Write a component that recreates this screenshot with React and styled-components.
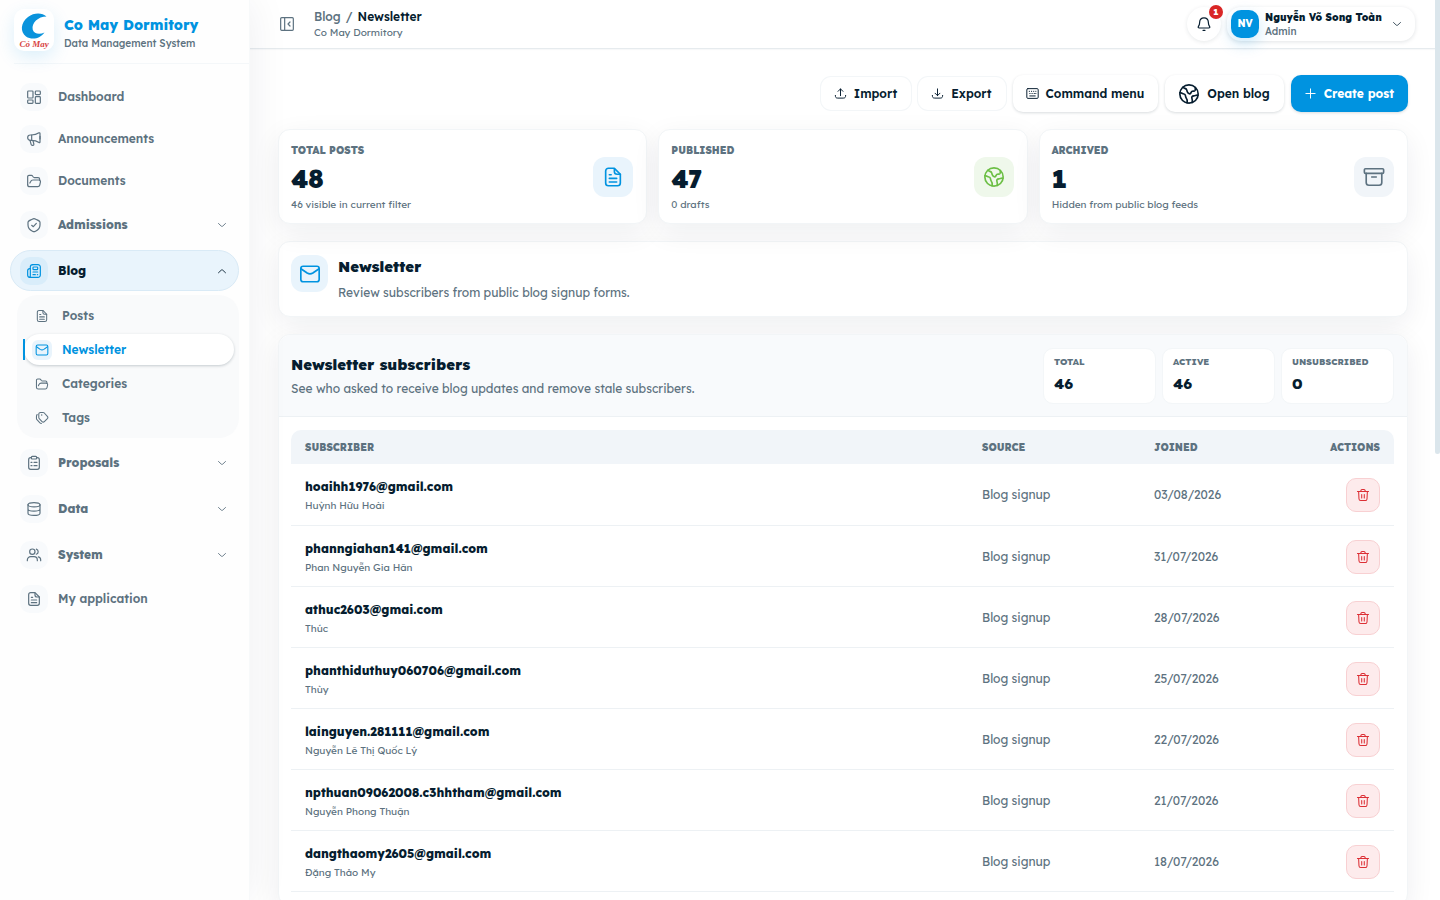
import React from 'react'
import styled, { createGlobalStyle, css, ThemeProvider } from 'styled-components'

const theme = {
  colors: {
    primary: '#0093e0',
    ink: '#061d2f',
    muted: '#5d7280',
    line: '#edf1f4',
    soft: '#f1f5f9',
    tint: '#e9f4fc',
    danger: '#dc2f35',
  },
}

const GlobalStyle = createGlobalStyle`
  * {
    box-sizing: border-box;
  }
  body {
    margin: 0;
    overflow: hidden;
    background: #fff;
    color: ${theme.colors.ink};
    font-family: Lexend, Inter, 'Noto Sans', sans-serif;
    font-size: 12px;
    line-height: 16px;
  }
  button {
    font: inherit;
    color: inherit;
    border: 0;
    padding: 0;
    background: none;
    cursor: pointer;
  }
  a {
    color: inherit;
    text-decoration: none;
  }
  h1, h2, p, ul {
    margin: 0;
    padding: 0;
  }
  ul {
    list-style: none;
  }
`

// 24x24 outlines, one entry per icon
const shapes = {
  dashboard: (
    <>
      <rect x="2.5" y="3" width="8" height="10.5" rx="1.2" />
      <rect x="14" y="3" width="7.5" height="5.5" rx="1.2" />
      <rect x="2.5" y="16.5" width="8" height="5" rx="1.2" />
      <rect x="14" y="11.5" width="7.5" height="10" rx="1.2" />
    </>
  ),
  megaphone: (
    <>
      <path d="M8 6c5 0 9-1.5 11.5-3.2.7-.4 1.5 0 1.5.8v13c0 .8-.9 1.2-1.5.8C17 15.500 13 14 8 14H6.500a4 4 0 0 1 0-8H8Z" />
      <path d="M8.500 6v8M6 14l1.700 6c.2.9.9 1.500 1.800 1.500h1c1 0 1.600-.9 1.300-1.800L10.500 14.300M21 8v4" />
    </>
  ),
  folder: (
    <>
      <path d="M2.500 17.500V5.500a2 2 0 0 1 2-2h3.700a2 2 0 0 1 1.700 1l1 1.500a2 2 0 0 0 1.600.8H18a2.500 2.500 0 0 1 2.500 2.500v1.200" />
      <path d="M2.500 17.500a3 3 0 0 0 3 3h12.200a3 3 0 0 0 2.900-2.300l1-4.500a2.500 2.500 0 0 0-2.400-3.200h-8.700a4 4 0 0 0-3.700 2.500L5.800 15" />
    </>
  ),
  shield: (
    <>
      <path d="M12 2.500c-1 0-2 .5-4 1.400-3.300 1.300-5 2-5 4.100v4c0 5 4 8 6.700 9.300.8.4 1.500.7 2.300.7s1.500-.3 2.300-.7C17 20 21 17 21 12V8c0-2.100-1.700-2.800-5-4.100-2-.9-3-1.400-4-1.400Z" />
      <path d="m8.500 12.500 2.500 2 4.500-5" />
    </>
  ),
  news: (
    <>
      <path d="M10 2.500h8a3.500 3.500 0 0 1 3.500 3.500v12a3.500 3.500 0 0 1-3.500 3.500H5.500a3 3 0 0 1-3-3v-7a3 3 0 0 1 3-3h1" />
      <path d="M6.500 8.500V6A3.500 3.500 0 0 1 10 2.500M6.500 8v10.500a2.500 2.500 0 0 1-1.500 3" />
      <rect x="10.5" y="6" width="7" height="4" rx="1" />
      <path d="M10.500 13.500h7M10.500 17.500H14M17 17.500h.5" />
    </>
  ),
  file: (
    <>
      <path d="M7 2.500h6.500L20 9v9.500a3 3 0 0 1-3 3H7a3 3 0 0 1-3-3v-13a3 3 0 0 1 3-3Z" />
      <path d="M13.500 3v3a3 3 0 0 0 3 3H20M8 9.500h2M8 13.500h8M8 17.500h8" />
    </>
  ),
  mail: (
    <>
      <rect x="2" y="3.5" width="20" height="17" rx="2.5" />
      <path d="m2.500 6.500 6.400 4.400c2.500 1.600 3.700 1.600 6.200 0l6.400-4.400" />
    </>
  ),
  tags: (
    <>
      <path d="M6.500 8V5.500a3 3 0 0 1 3-3h4.300a3 3 0 0 1 2.100.9l5.300 5.800a2.800 2.800 0 0 1 0 3.800l-5.200 5.200a2.800 2.800 0 0 1-4 0l-4.700-5a3 3 0 0 1-.8-2Z" />
      <path d="M3.800 6c-1 .9-1.300 2-1.300 3.500v3.300a3 3 0 0 0 .8 2.100l5.200 5.600c.8.8 1.700 1 2.500 1" />
      <path d="M11.500 7h.01" strokeWidth="2.5" />
    </>
  ),
  clipboard: (
    <>
      <path d="M8 4H7a3 3 0 0 0-3 3v11.500a3 3 0 0 0 3 3h10a3 3 0 0 0 3-3V7a3 3 0 0 0-3-3h-1" />
      <rect x="8" y="2" width="8" height="4" rx="1.5" />
      <path d="M7.500 11H9M12 11h4.500M7.500 16H9M12 16h4.500" />
    </>
  ),
  database: (
    <>
      <ellipse cx="12" cy="5.5" rx="9" ry="3.2" />
      <path d="M3 5.500v13c0 1.800 4 3.200 9 3.200s9-1.400 9-3.200v-13M3 12c0 1.800 4 3.200 9 3.200s9-1.400 9-3.200" />
    </>
  ),
  users: (
    <>
      <circle cx="9.5" cy="7" r="4" />
      <path d="M2 20.500v-1a5 5 0 0 1 5-5h5a5 5 0 0 1 5 5v1M15.500 3.200a4 4 0 0 1 0 7.600M18.500 14.800c2 .5 3.500 2.300 3.500 4.500v1.200" />
    </>
  ),
  panel: (
    <>
      <rect x="2.5" y="2.5" width="19" height="19" rx="1.5" />
      <path d="M8.500 3v18M16.500 9l-3 3 3 3" />
    </>
  ),
  bell: (
    <>
      <path d="M12 2.800c-3.800 0-6.300 2.700-6.500 6.200-.2 3.500 0 4-1.800 6.600C2.700 17 3.300 18 5 18h14c1.700 0 2.300-1 1.300-2.400C18.500 13 18.700 12.500 18.500 9c-.2-3.500-2.700-6.200-6.500-6.200Z" />
      <path d="M10.500 21.500h3" />
    </>
  ),
  upload: <path d="M12 16V3.500M7.500 8 12 3.500 16.500 8M2.500 15.500c0 3.500.9 5 4.500 5h10c3.600 0 4.500-1.500 4.500-5" />,
  download: <path d="M12 3.500V16M7.500 11.500 12 16l4.500-4.500M2.500 15.500c0 3.500.9 5 4.500 5h10c3.600 0 4.500-1.500 4.500-5" />,
  keyboard: (
    <>
      <rect x="1.5" y="3" width="21" height="18" rx="2" />
      <path d="M6 8h.5M10 8h.5M14 8h.5M18 8h.3M7 12h.5M11 12h.5M15 12h.5M18 12h.3M7 16.500h10" />
    </>
  ),
  earth: (
    <>
      <circle cx="12" cy="12" r="10" />
      <path d="M5.500 4.500c1 1.800 3.500 1 4 3 .4 1.700.8 3.800 2.800 4.300 1.900.4 1.600-2.100 3.300-2.700 1.400-.5 2.200.3 3-1.100.5-1 .2-2 .2-3" />
      <path d="M2 10.500c2 0 2.500 1.300 4.500 1.500 2.300.2 1.200 2.600 2.300 4 1.200 1.500 1.700 3.500 1.200 5.700M21.800 13.500c-1.500-.8-3 .5-4.500.5-2 0-2.700 1.500-2 3.300.5 1.500.5 2.700 0 4" />
    </>
  ),
  plus: <path d="M12 3.500v17M3.500 12h17" />,
  archive: (
    <>
      <rect x="1.5" y="3" width="21" height="5" rx="1.2" />
      <path d="M3.500 8v10a3 3 0 0 0 3 3h11a3 3 0 0 0 3-3V8M9.500 12h5" />
    </>
  ),
  trash: (
    <path d="m19.500 6-.6 12.500a3 3 0 0 1-3 3H8.100a3 3 0 0 1-3-3L4.500 6M2.500 6h19M8 5.500l.8-2a1.800 1.800 0 0 1 1.600-1h3.200c.7 0 1.300.4 1.600 1l.8 2M9.800 11v6M14.200 11v6" />
  ),
  down: <path d="m5 9 5.600 5.300c.8.7 2 .7 2.800 0L19 9" />,
  up: <path d="m5 15.500 5.600-5.300c.8-.7 2-.7 2.800 0L19 15.500" />,
}

const Svg = styled.svg`
  display: block;
  flex: none;
  fill: none;
  stroke: currentColor;
  stroke-linecap: round;
  stroke-linejoin: round;
`
function Icon({ name, size = 16, weight = 1.8 }) {
  return (
    <Svg width={size} height={size} viewBox="0 0 24 24" strokeWidth={weight} aria-hidden="true">
      {shapes[name]}
    </Svg>
  )
}

const Shell = styled.div`
  display: flex;
  height: 100vh;
  overflow: hidden;
`
const Sidebar = styled.aside`
  position: relative;
  flex: none;
  width: 250px;
  border-right: 1px solid #f7f9fa;
  background: #fefefe;
  box-shadow: 0 0 40px rgba(15, 35, 50, 0.07);
`
const Brand = styled.div`
  display: flex;
  align-items: center;
  gap: 10px;
  height: 64px;
  margin-left: 14px;
  border-bottom: 1px solid #f4f7f9;
`
const Logo = styled.div`
  width: 40px;
  height: 42px;
  margin-bottom: 4px;
  border-radius: 10px;
  background: #fff;
  box-shadow: 0 6px 18px rgba(0, 147, 224, 0.14);
`
const BrandName = styled.p`
  color: ${(props) => props.theme.colors.primary};
  font-size: 14px;
  font-weight: 800;
  line-height: 20px;
`
const BrandNote = styled.p`
  color: ${(props) => props.theme.colors.muted};
  font-size: 10px;
  font-weight: 500;
  line-height: 18px;
`
const BrandText = styled.div`
  padding-top: 4px;
`
const Menu = styled.ul`
  display: flex;
  flex-direction: column;
  gap: 4px;
  padding: 14px 10px;
`
const entry = css`
  display: flex;
  align-items: center;
  gap: 10px;
  width: 100%;
  color: ${(props) => props.theme.colors.muted};
  text-align: left;
`
const MenuLink = styled.a`
  ${entry}
  height: 38px;
  padding: 0 10px;
  font-weight: 600;
`
const MenuGroup = styled.button`
  ${entry}
  height: ${(props) => (props.$open ? 41 : 42)}px;
  padding: 0 10px 0 9px;
  border: 1px solid ${(props) => (props.$open ? '#d9eaf6' : 'transparent')};
  border-radius: 21px;
  background: ${(props) => (props.$open ? props.theme.colors.tint : 'none')};
  color: ${(props) => (props.$open ? props.theme.colors.ink : props.theme.colors.muted)};
  font-weight: 800;
`
const MenuIcon = styled.span`
  display: grid;
  place-items: center;
  width: 28px;
  height: 28px;
  border-radius: 10px;
  background: ${(props) => (props.$open ? '#d9edfa' : '#f8fafc')};
  color: ${(props) => (props.$open ? props.theme.colors.primary : 'inherit')};
`
const MenuLabel = styled.span`
  flex: 1;
`
const Submenu = styled.ul`
  display: flex;
  flex-direction: column;
  gap: 3px;
  margin: 4px 0 0 7px;
  padding: 5px 5px 5px 7px;
  border-radius: 20px;
  background: #f9fafb;
`
const SubLink = styled.a`
  ${entry}
  position: relative;
  height: 31px;
  padding: 0 8px;
  border-radius: 16px;
  font-weight: 600;

  ${(props) =>
    props.$active &&
    css`
      color: ${props.theme.colors.primary};
      background: #fff;
      box-shadow: 0 1px 3px rgba(15, 35, 50, 0.22);

      &:before {
        content: '';
        position: absolute;
        left: -1px;
        top: 5px;
        width: 2px;
        height: 21px;
        background: ${props.theme.colors.primary};
      }
    `}
`
const SubIcon = styled.span`
  display: grid;
  place-items: center;
  width: 20px;
  height: 20px;
  border-radius: 6px;
  background: ${(props) => (props.$active ? props.theme.colors.tint : 'none')};
`
const Page = styled.div`
  display: flex;
  flex: 1;
  flex-direction: column;
  min-width: 0;
`
const ScrollRail = styled.div`
  flex: none;
  width: 5px;
`
const ScrollThumb = styled.div`
  height: 50.4vh;
  border-radius: 0 0 3px 3px;
  background: #dbe6ec;
`
const Topbar = styled.header`
  display: flex;
  flex: none;
  align-items: center;
  height: 49px;
  padding: 0 20px 0 29px;
  border-bottom: 1px solid #e6ebee;
  box-shadow: 0 1px 1px rgba(15, 35, 50, 0.03);
`
const PanelToggle = styled.button`
  color: ${(props) => props.theme.colors.muted};
`
const Crumbs = styled.nav`
  flex: 1;
  margin-left: 19px;
  padding-top: 2px;
  color: ${(props) => props.theme.colors.muted};
`
const CrumbTrail = styled.p`
  display: flex;
  gap: 5px;
  font-weight: 500;
`
const Current = styled.span`
  color: ${(props) => props.theme.colors.ink};
  font-weight: 600;
`
const CrumbNote = styled.p`
  font-size: 10px;
`
const Bell = styled.button`
  position: relative;
  display: grid;
  place-items: center;
  width: 34px;
  height: 34px;
  margin-right: 6px;
  border-radius: 17px;
  box-shadow: 0 1px 4px rgba(15, 35, 50, 0.1);
`
const Badge = styled.span`
  position: absolute;
  top: -2px;
  right: -2px;
  width: 14px;
  height: 14px;
  border-radius: 7px;
  background: #d92626;
  color: #fff;
  font-size: 9px;
  font-weight: 800;
  line-height: 14px;
`
const Account = styled.button`
  display: flex;
  align-items: center;
  gap: 6px;
  width: 188px;
  height: 34px;
  padding: 0 12px 0 4px;
  border-radius: 14px;
  text-align: left;
  box-shadow: 0 1px 4px rgba(15, 35, 50, 0.12);
`
const Avatar = styled.span`
  display: grid;
  flex: none;
  place-items: center;
  width: 28px;
  height: 28px;
  border-radius: 10px;
  background: ${(props) => props.theme.colors.primary};
  color: #fff;
  font-size: 10px;
  font-weight: 800;
  box-shadow: 0 6px 16px rgba(0, 147, 224, 0.2);
`
const AccountText = styled.span`
  flex: 1;
  display: flex;
  flex-direction: column;
  padding-top: 2px;
  font-size: 10px;
  font-weight: 900;
  line-height: 14px;
  white-space: nowrap;
`
const Role = styled.span`
  color: ${(props) => props.theme.colors.muted};
  font-weight: 500;
`
const Content = styled.main`
  flex: 1;
  min-height: 0;
  overflow: hidden;
  padding: 26px 27px 0 28px;
`
const Actions = styled.div`
  display: flex;
  align-items: center;
  justify-content: flex-end;
  gap: 7px;
  margin-bottom: 17px;
`
const Action = styled.button`
  display: flex;
  align-items: center;
  gap: 7px;
  height: ${(props) => (props.$small ? 33 : 37)}px;
  padding: 0 14px 0 13px;
  border-radius: 10px;
  background: ${(props) => (props.$primary ? props.theme.colors.primary : '#fff')};
  color: ${(props) => (props.$primary ? '#fff' : props.theme.colors.ink)};
  font-weight: ${(props) => (props.$primary ? 700 : 600)};
  white-space: nowrap;
  box-shadow: ${(props) =>
    props.$small ? '0 0 0 1px #f3f6f8' : '0 1px 3px rgba(15, 35, 50, 0.16)'};
`
const raised = css`
  border: 1px solid #f2f5f7;
  border-radius: 12px;
  background: #fff;
  box-shadow: 0 8px 28px rgba(15, 35, 50, 0.07);
`
const Stats = styled.div`
  display: grid;
  grid-template-columns: repeat(3, 1fr);
  gap: 11px;
  margin-bottom: 17px;
`
const Stat = styled.section`
  ${raised}
  display: flex;
  align-items: center;
  justify-content: space-between;
  height: 95px;
  padding: 0 13px 0 12px;
`
const Caption = styled.h2`
  color: ${(props) => props.theme.colors.muted};
  font-size: ${(props) => (props.$tiny ? 9 : 10)}px;
  font-weight: ${(props) => (props.$tiny ? 800 : 900)};
  line-height: 16px;
  text-transform: uppercase;
`
const StatValue = styled.p`
  font-size: 25px;
  font-weight: 900;
  line-height: 40px;
`
const StatNote = styled.p`
  color: ${(props) => props.theme.colors.muted};
  font-size: 10px;
  line-height: 12px;
`
const tones = {
  blue: ['#e9f4fc', '#0093e0'],
  green: ['#eff8eb', '#6cbf45'],
  grey: ['#f1f5f9', '#5d7280'],
}
const Tile = styled.span`
  display: grid;
  flex: none;
  place-items: center;
  width: ${(props) => props.$size}px;
  height: ${(props) => props.$size}px;
  border-radius: 12px;
  background: ${(props) => tones[props.$tone][0]};
  color: ${(props) => tones[props.$tone][1]};
`
const Intro = styled.section`
  ${raised}
  display: flex;
  gap: 10px;
  height: 76px;
  margin-bottom: 17px;
  padding: 13px 12px;
`
const IntroText = styled.div`
  display: flex;
  flex-direction: column;
  gap: 2px;
`
const Heading = styled.h1`
  font-size: 15px;
  font-weight: 900;
  line-height: 24px;
`
const Lead = styled.p`
  color: ${(props) => props.theme.colors.muted};
  line-height: 24px;
`
const Panel = styled.section`
  ${raised}
`
const PanelHead = styled.div`
  display: flex;
  align-items: center;
  justify-content: space-between;
  height: 82px;
  padding: 0 13px 0 12px;
  border-bottom: 1px solid ${(props) => props.theme.colors.line};
  border-radius: 12px 12px 0 0;
  background: #f8fafc;
`
const PanelText = styled.div`
  padding-top: 2px;
`
const Counters = styled.div`
  display: grid;
  grid-template-columns: repeat(3, 113px);
  gap: 6px;
`
const Counter = styled.div`
  height: 56px;
  padding: 5px 10px;
  border: 1px solid #f3f6f8;
  border-radius: 10px;
  background: #fff;
`
const CounterValue = styled.p`
  font-size: 15px;
  font-weight: 800;
  line-height: 28px;
`
const TableWrap = styled.div`
  padding: 13px 13px 13px 12px;
`
const Table = styled.table`
  width: 100%;
  border-collapse: separate;
  border-spacing: 0;
  table-layout: fixed;
`
const HeadCell = styled.th`
  width: ${(props) => props.$width || 'auto'};
  height: 34px;
  padding: 2px 14px 0;
  background: ${(props) => props.theme.colors.soft};
  color: ${(props) => props.theme.colors.muted};
  font-size: 10px;
  font-weight: 900;
  text-align: ${(props) => (props.$end ? 'right' : 'left')};
  text-transform: uppercase;

  &:first-child {
    border-top-left-radius: 10px;
  }
  &:last-child {
    border-top-right-radius: 10px;
  }
`
const Cell = styled.td`
  height: 61px;
  padding: 1px 14px 0;
  border-bottom: 1px solid ${(props) => props.theme.colors.line};
  color: ${(props) => props.theme.colors.muted};

  tr:first-child > & {
    height: 62px;
  }
`
const Subscriber = styled.div`
  padding-top: 2px;
`
const Email = styled.p`
  color: ${(props) => props.theme.colors.ink};
  font-weight: 800;
  line-height: 20px;
`
const Person = styled.p`
  font-size: 10px;
  line-height: 18px;
`
const Remove = styled.button`
  display: grid;
  place-items: center;
  width: 34px;
  height: 34px;
  margin-left: auto;
  border: 1px solid #f8d0d2;
  border-radius: 10px;
  background: #fdebec;
  color: ${(props) => props.theme.colors.danger};
`

const menu = [
  { label: 'Dashboard', icon: 'dashboard' },
  { label: 'Announcements', icon: 'megaphone' },
  { label: 'Documents', icon: 'folder' },
  { label: 'Admissions', icon: 'shield', group: true },
  {
    label: 'Blog',
    icon: 'news',
    group: true,
    children: [
      { label: 'Posts', icon: 'file' },
      { label: 'Newsletter', icon: 'mail', active: true },
      { label: 'Categories', icon: 'folder' },
      { label: 'Tags', icon: 'tags' },
    ],
  },
  { label: 'Proposals', icon: 'clipboard', group: true },
  { label: 'Data', icon: 'database', group: true },
  { label: 'System', icon: 'users', group: true },
  { label: 'My application', icon: 'file' },
]

const stats = [
  { label: 'Total posts', value: 48, note: '46 visible in current filter', icon: 'file', tone: 'blue' },
  { label: 'Published', value: 47, note: '0 drafts', icon: 'earth', tone: 'green' },
  { label: 'Archived', value: 1, note: 'Hidden from public blog feeds', icon: 'archive', tone: 'grey' },
]

const counters = [
  ['Total', 46],
  ['Active', 46],
  ['Unsubscribed', 0],
]

const subscribers = [
  ['hoaihh1976@gmail.com', 'Huỳnh Hữu Hoài', '03/08/2026'],
  ['phanngiahan141@gmail.com', 'Phan Nguyễn Gia Hân', '31/07/2026'],
  ['athuc2603@gmai.com', 'Thúc', '28/07/2026'],
  ['phanthiduthuy060706@gmail.com', 'Thùy', '25/07/2026'],
  ['lainguyen.281111@gmail.com', 'Nguyễn Lê Thị Quốc Lý', '22/07/2026'],
  ['npthuan09062008.c3hhtham@gmail.com', 'Nguyễn Phong Thuận', '21/07/2026'],
  ['dangthaomy2605@gmail.com', 'Đặng Thảo My', '18/07/2026'],
]

function MenuItem({ item }) {
  const open = Boolean(item.children)
  const icon = (
    <MenuIcon $open={open}>
      <Icon name={item.icon} />
    </MenuIcon>
  )
  if (!item.group) {
    return (
      <li>
        <MenuLink href="#">
          {icon}
          <MenuLabel>{item.label}</MenuLabel>
        </MenuLink>
      </li>
    )
  }
  return (
    <li>
      <MenuGroup type="button" $open={open} aria-expanded={open}>
        {icon}
        <MenuLabel>{item.label}</MenuLabel>
        <Icon name={open ? 'up' : 'down'} size={12} />
      </MenuGroup>
      {open && (
        <Submenu>
          {item.children.map((child) => (
            <li key={child.label}>
              <SubLink href="#" $active={child.active}>
                <SubIcon $active={child.active}>
                  <Icon name={child.icon} size={14} />
                </SubIcon>
                {child.label}
              </SubLink>
            </li>
          ))}
        </Submenu>
      )}
    </li>
  )
}

function BrandLogo() {
  return (
    <Logo>
      <svg width="40" height="42" viewBox="0 0 40 42" aria-hidden="true">
        <path
          d="M32.500 7.500C28 3.500 20 3.500 14 8 6.500 13.500 6 23 12 27.500c6 4 14.500 2 18.500-4-5 2.500-10.500 1.500-11.800-3C17.500 14 24 7.500 32.500 7.500Z"
          fill="#0a93dc"
        />
        <text
          x="20"
          y="38"
          textAnchor="middle"
          fontFamily="'Liberation Serif', serif"
          fontSize="9"
          fontStyle="italic"
          fontWeight="700"
          fill="#d8433f"
        >
          Cỏ May
        </text>
      </svg>
    </Logo>
  )
}

export default function App() {
  return (
    <ThemeProvider theme={theme}>
      <GlobalStyle />
      <Shell>
        <Sidebar>
          <Brand>
            <BrandLogo />
            <BrandText>
              <BrandName>Co May Dormitory</BrandName>
              <BrandNote>Data Management System</BrandNote>
            </BrandText>
          </Brand>
          <nav>
            <Menu>
              {menu.map((item) => (
                <MenuItem key={item.label} item={item} />
              ))}
            </Menu>
          </nav>
        </Sidebar>
        <Page>
          <Topbar>
            <PanelToggle type="button" aria-label="Toggle sidebar">
              <Icon name="panel" />
            </PanelToggle>
            <Crumbs>
              <CrumbTrail>
                <a href="#">Blog</a>
                <span>/</span>
                <Current>Newsletter</Current>
              </CrumbTrail>
              <CrumbNote>Co May Dormitory</CrumbNote>
            </Crumbs>
            <Bell type="button" aria-label="Notifications">
              <Icon name="bell" />
              <Badge>1</Badge>
            </Bell>
            <Account type="button">
              <Avatar>NV</Avatar>
              <AccountText>
                Nguyễn Võ Song Toàn
                <Role>Admin</Role>
              </AccountText>
              <Icon name="down" size={12} weight={1.5} />
            </Account>
          </Topbar>
          <Content>
            <Actions>
              <Action type="button" $small>
                <Icon name="upload" size={13} />
                Import
              </Action>
              <Action type="button" $small>
                <Icon name="download" size={13} />
                Export
              </Action>
              <Action type="button">
                <Icon name="keyboard" size={13} />
                Command menu
              </Action>
              <Action type="button">
                <Icon name="earth" size={22} />
                Open blog
              </Action>
              <Action type="button" $primary>
                <Icon name="plus" size={13} />
                Create post
              </Action>
            </Actions>
            <Stats>
              {stats.map((stat) => (
                <Stat key={stat.label}>
                  <div>
                    <Caption>{stat.label}</Caption>
                    <StatValue>{stat.value}</StatValue>
                    <StatNote>{stat.note}</StatNote>
                  </div>
                  <Tile $size={40} $tone={stat.tone}>
                    <Icon name={stat.icon} size={22} />
                  </Tile>
                </Stat>
              ))}
            </Stats>
            <Intro>
              <Tile $size={37} $tone="blue">
                <Icon name="mail" size={22} />
              </Tile>
              <IntroText>
                <Heading>Newsletter</Heading>
                <Lead>Review subscribers from public blog signup forms.</Lead>
              </IntroText>
            </Intro>
            <Panel>
              <PanelHead>
                <PanelText>
                  <Heading as="h2">Newsletter subscribers</Heading>
                  <Lead>See who asked to receive blog updates and remove stale subscribers.</Lead>
                </PanelText>
                <Counters>
                  {counters.map(([label, value]) => (
                    <Counter key={label}>
                      <Caption as="p" $tiny>
                        {label}
                      </Caption>
                      <CounterValue>{value}</CounterValue>
                    </Counter>
                  ))}
                </Counters>
              </PanelHead>
              <TableWrap>
                <Table>
                  <thead>
                    <tr>
                      <HeadCell>Subscriber</HeadCell>
                      <HeadCell $width="172px">Source</HeadCell>
                      <HeadCell $width="140px">Joined</HeadCell>
                      <HeadCell $width="114px" $end>
                        Actions
                      </HeadCell>
                    </tr>
                  </thead>
                  <tbody>
                    {subscribers.map(([email, name, joined]) => (
                      <tr key={email}>
                        <Cell>
                          <Subscriber>
                            <Email>{email}</Email>
                            <Person>{name}</Person>
                          </Subscriber>
                        </Cell>
                        <Cell>Blog signup</Cell>
                        <Cell>{joined}</Cell>
                        <Cell>
                          <Remove type="button" aria-label={`Remove ${email}`}>
                            <Icon name="trash" size={14} />
                          </Remove>
                        </Cell>
                      </tr>
                    ))}
                  </tbody>
                </Table>
              </TableWrap>
            </Panel>
          </Content>
        </Page>
        <ScrollRail>
          <ScrollThumb />
        </ScrollRail>
      </Shell>
    </ThemeProvider>
  )
}
